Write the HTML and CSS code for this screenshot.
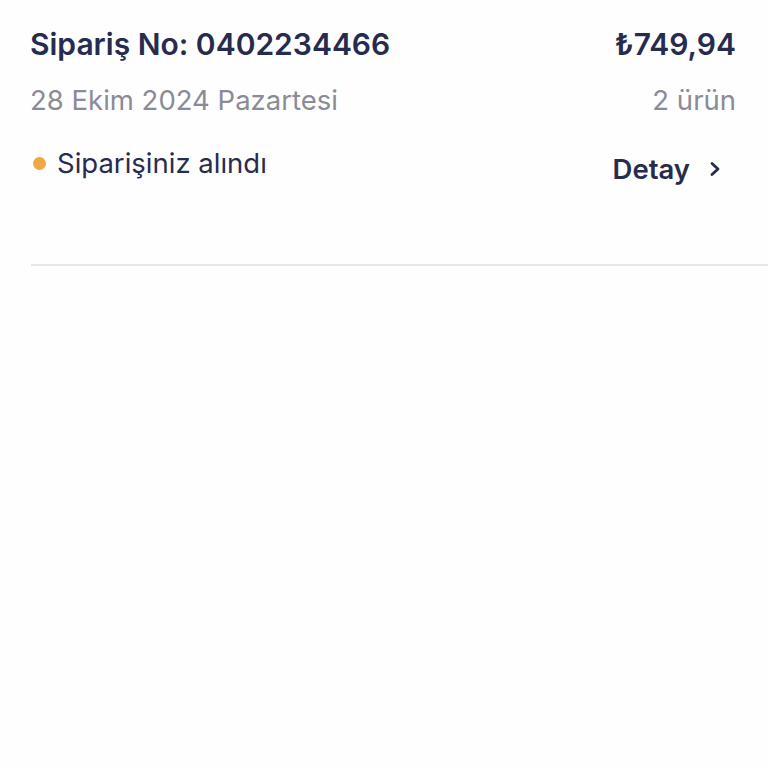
FILE: index.html
```html
<!DOCTYPE html>
<html lang="tr">
<head>
    <meta charset="UTF-8">
    <meta name="viewport" content="width=device-width, initial-scale=1.0">
    <title>Siparişlerim</title>
    <link rel="stylesheet" href="styles.css">
</head>
<body>
    <section class="order">
        <div class="order-row">
            <span class="order-no">Sipariş No: 0402234466</span>
            <span class="order-total">₺749,94</span>
        </div>
        <div class="order-row order-meta">
            <span>28 Ekim 2024 Pazartesi</span>
            <span>2 ürün</span>
        </div>
        <div class="order-row order-status-row">
            <span class="order-status"><span class="status-dot"></span>Siparişiniz alındı</span>
            <a class="detail-link" href="#">Detay
                <svg width="14" height="16" viewBox="0 0 14 16">
                    <path d="M4 2.5 L10 8 L4 13.5" fill="none" stroke="currentColor" stroke-width="2.8" stroke-linecap="round" stroke-linejoin="round"/>
                </svg>
            </a>
        </div>
    </section>
    <div class="divider"></div>
</body>
</html>
```
FILE: styles.css
```css
body {
    font-family: 'Inter', 'Liberation Sans', sans-serif;
    margin: 0;
    padding: 0;
    background-color: #fefefe;
    color: #272c4e;
}

.order {
    padding: 26px 32px 0 30px;
}

.order-row {
    display: flex;
    justify-content: space-between;
    align-items: flex-start;
}

.order-no,
.order-total {
    font-size: 30px;
    font-weight: 600;
    line-height: 36px;
}

.order-meta {
    margin-top: 21px;
    font-size: 27.5px;
    line-height: 34px;
    color: #8b8b98;
}

.order-status-row {
    margin-top: 30px;
}

.order-status {
    display: flex;
    align-items: center;
    font-size: 27.5px;
    line-height: 32px;
}

.status-dot {
    width: 13px;
    height: 13px;
    border-radius: 50%;
    background-color: #f1a843;
    margin: 0 11px 0 3px;
}

.detail-link {
    display: flex;
    align-items: center;
    gap: 18px;
    margin-top: 6px;
    margin-right: 14px;
    font-size: 27.5px;
    font-weight: 600;
    line-height: 32px;
    color: #272c4e;
    text-decoration: none;
}

.divider {
    margin: 79px 0 0 31px;
    height: 2px;
    background-color: #e6e6e8;
}
```
